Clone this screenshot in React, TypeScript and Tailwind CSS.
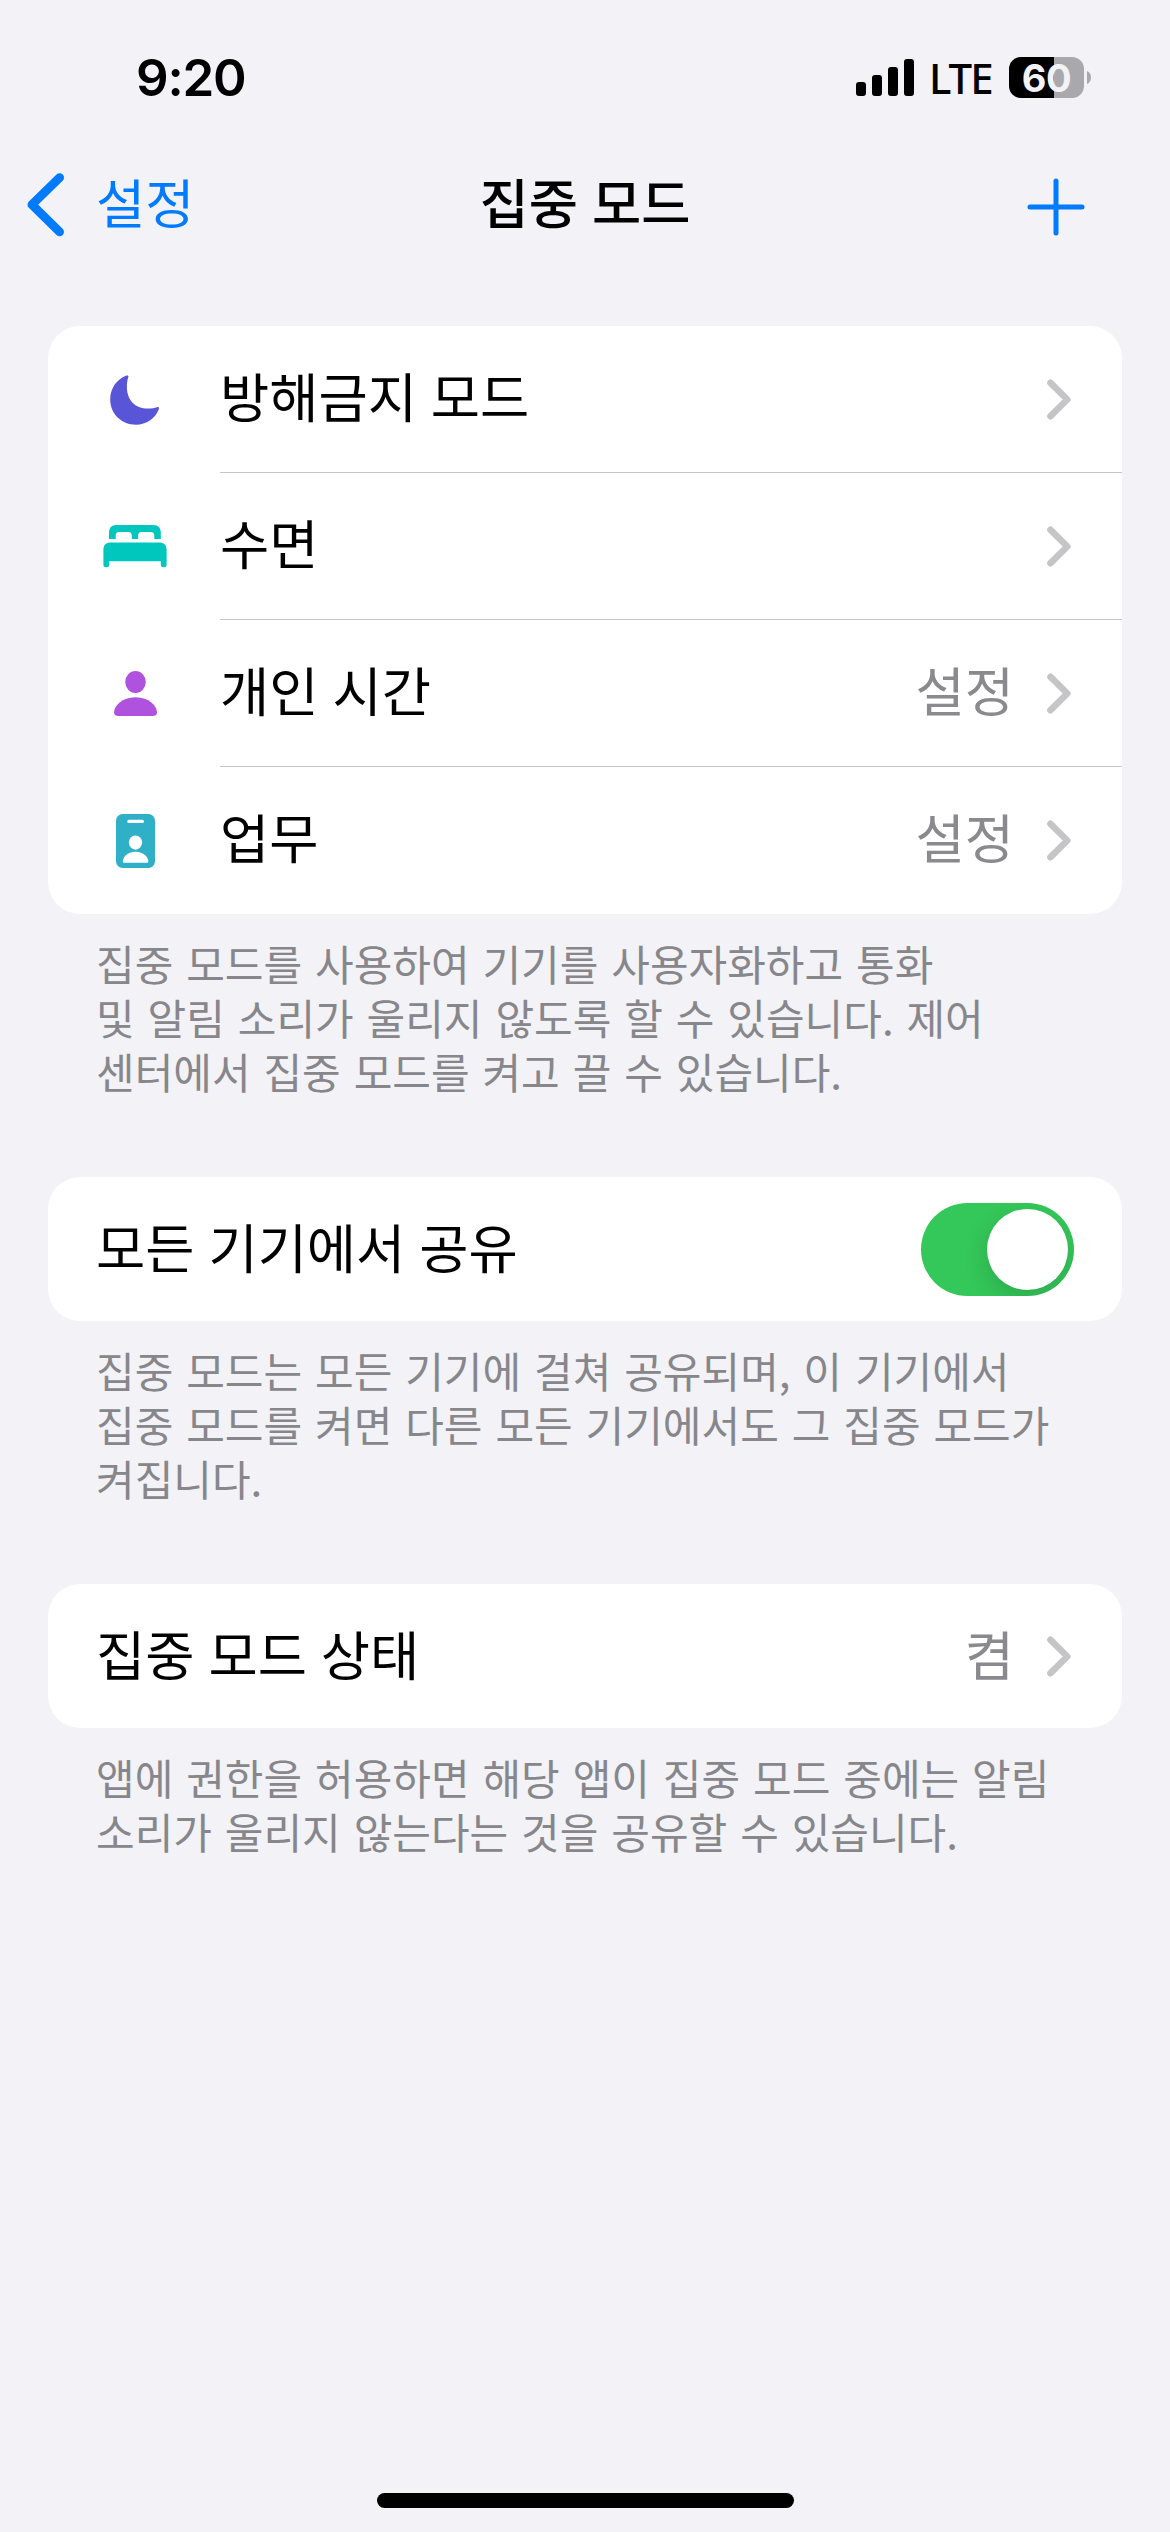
import type { ReactNode } from "react";

/* -----------------------
   Data models
   ----------------------- */
type FocusMode = {
  id: string;
  label: string;
  value?: string;
  icon: ReactNode;
};

/* -----------------------
   Icons
   ----------------------- */
const MoonIcon = () => (
  <svg width="50" height="50" viewBox="0 0 50 50" fill="#5856d6">
    <path d="M16.6 .5C18 .1 18.8 .8 18.3 2.2C17.2 5.5 16.9 8 16.9 12C16.9 25 25 33.6 38 33.6C42 33.6 44.500 33.1 47 32.3C48.800 31.700 49.400 32.7 48.800 34.3C45 43.800 36.500 49.7 26 49.7C11.500 49.7 .2 38.800 .2 24.2C.2 13.500 6.8 3.900 16.6 .5Z" />
  </svg>
);

const BedIcon = () => (
  <svg width="64" height="43" viewBox="0 0 64 43" fill="#00c7be">
    <path d="M6 14V7.500C6 3 8.600 0 13.300 0H50.500C55.200 0 57.800 3 57.800 7.500V14H51.300V10.500C51.300 8.200 50.200 7 48 7H38.500C36.300 7 35.200 8.200 35.200 10.500V14H28.800V10.500C28.800 8.200 27.700 7 25.500 7H16C13.800 7 12.700 8.200 12.700 10.500V14Z" />
    <path d="M.4 25C.4 20 3.200 17.600 8 17.600H56C60.800 17.600 63.600 20 63.600 25V39.500C63.600 41.200 62.800 42.200 61.500 42.200H60C58.600 42.200 57.800 41.300 57.800 39.500V36.300H6.200V39.500C6.200 41.300 5.400 42.200 4 42.200H2.500C1.200 42.200 .4 41.200 .4 39.500Z" />
  </svg>
);

const PersonIcon = () => (
  <svg width="43" height="45" viewBox="0 0 43 45" fill="#af52de">
    <ellipse cx="21.500" cy="11" rx="10.300" ry="11" />
    <path d="M4.500 45C1.500 45 0 43.800 0 41.500C0 35 8 26.300 21.500 26.300C35 26.300 43 35 43 41.500C43 43.800 41.500 45 38.500 45Z" />
  </svg>
);

const BadgeIcon = () => (
  <svg width="39" height="54" viewBox="0 0 39 54">
    <rect width="39" height="54" rx="6.500" fill="#30b0c7" />
    <rect x="11.300" y="5.800" width="16.600" height="3.300" rx="1.600" fill="#fff" />
    <ellipse cx="19.500" cy="28.600" rx="6.600" ry="7.100" fill="#fff" />
    <path
      d="M8.500 48.800C7.300 48.800 6.800 48.300 6.800 47.300C6.800 43.300 11.500 37.700 19.500 37.700C27.500 37.700 32.300 43.300 32.300 47.300C32.300 48.300 31.800 48.800 30.600 48.800Z"
      fill="#fff"
    />
  </svg>
);

const Chevron = () => (
  <svg
    width="24"
    height="41"
    viewBox="0 0 24 41"
    fill="none"
    stroke="#c5c5c7"
    strokeWidth="6.600"
    strokeLinecap="round"
    strokeLinejoin="round"
  >
    <path d="M3.500 3.800L20.300 20.500L3.500 37.200" />
  </svg>
);

const FOCUS_MODES: FocusMode[] = [
  { id: "dnd", label: "방해금지 모드", icon: <MoonIcon /> },
  { id: "sleep", label: "수면", icon: <BedIcon /> },
  { id: "personal", label: "개인 시간", value: "설정", icon: <PersonIcon /> },
  { id: "work", label: "업무", value: "설정", icon: <BadgeIcon /> },
];

/* -----------------------
   Building blocks
   ----------------------- */
const StatusBar = () => (
  <div className="flex h-[150px] items-center pt-[5px] pl-[136px] pr-[79px] font-['Inter',sans-serif]">
    <span className="text-[51px] leading-none font-semibold tracking-[-1.2px]">
      9:20
    </span>
    <div className="ml-auto flex items-center">
      <svg width="58" height="37" viewBox="0 0 58 37">
        <rect x="0" y="23" width="10" height="14" rx="3" />
        <rect x="16" y="16" width="10" height="21" rx="3" />
        <rect x="32" y="8" width="10" height="29" rx="3" />
        <rect x="48" y="0" width="10" height="37" rx="3" />
      </svg>
      <span className="ml-[15px] w-[63px] pt-[1px] font-['Noto_Sans',sans-serif] text-[42px] leading-none font-medium tracking-[-2px]">
        LTE
      </span>
      <div className="ml-[17px] flex h-[41px] w-[75px] items-center justify-center rounded-[12px] bg-linear-to-r from-black from-60% to-[#a9a8ad] to-60%">
        <span className="text-[38px] leading-none font-bold tracking-[-0.5px] text-[#f2f2f7]">
          60
        </span>
      </div>
      <svg className="ml-[3px]" width="4" height="13" viewBox="0 0 4 13">
        <path d="M0 0C2.500 1 4 3.500 4 6.500C4 9.500 2.500 12 0 13Z" fill="#a9a8ad" />
      </svg>
    </div>
  </div>
);

const NavBar = () => (
  <header className="grid h-[109px] grid-cols-3 items-center">
    <button className="flex items-center pl-[27px] text-[#007aff]">
      <svg
        width="38"
        height="64"
        viewBox="0 0 38 64"
        fill="none"
        stroke="currentColor"
        strokeWidth="8.800"
        strokeLinecap="round"
        strokeLinejoin="round"
      >
        <path d="M32.600 4.600L4.900 31.700L32.600 58.800" />
      </svg>
      <span className="-mt-[7px] ml-[31px]">설정</span>
    </button>
    <h1 className="-mt-[8px] text-center font-medium">집중 모드</h1>
    <button className="flex justify-end pt-[4px] pr-[85px] text-[#007aff]" aria-label="추가">
      <svg
        width="58"
        height="58"
        viewBox="0 0 58 58"
        stroke="currentColor"
        strokeWidth="5"
        strokeLinecap="round"
      >
        <path d="M29 3V55M3 29H55" />
      </svg>
    </button>
  </header>
);

const Card = ({ children }: { children: ReactNode }) => (
  <section className="overflow-hidden rounded-[32px] bg-white">{children}</section>
);

const Footnote = ({ lines }: { lines: string[] }) => (
  <p className="mt-[22px] mb-[79px] pl-12 text-[42px] leading-[54px] whitespace-nowrap text-[#87868b] [word-spacing:3.500px]">
    {lines.map((line) => (
      <span key={line} className="block">
        {line}
      </span>
    ))}
  </p>
);

const App = () => {
  return (
    <div className="flex h-[2532px] w-[1170px] flex-col bg-[#f2f2f7] font-['Noto_Sans_CJK_KR',sans-serif] text-[53.500px] leading-[72px] text-black [word-spacing:2px]">
      <StatusBar />
      <NavBar />

      <main className="px-12 pt-[67px]">
        {/* Focus list */}
        <Card>
          {FOCUS_MODES.map((mode, i) => (
            <div key={mode.id} className="flex h-[147px]">
              <div className="flex w-[172px] items-center justify-center pl-[2px]">
                {mode.icon}
              </div>
              <div
                className={`flex flex-1 items-center pr-[51px] ${
                  i < FOCUS_MODES.length - 1 ? "border-b border-[#c6c6c8]" : ""
                }`}
              >
                <span className="-mt-[9px]">{mode.label}</span>
                <span className="-mt-[9px] mr-[33px] ml-auto text-[#8a8a8e]">
                  {mode.value}
                </span>
                <Chevron />
              </div>
            </div>
          ))}
        </Card>
        <Footnote
          lines={[
            "집중 모드를 사용하여 기기를 사용자화하고 통화",
            "및 알림 소리가 울리지 않도록 할 수 있습니다. 제어",
            "센터에서 집중 모드를 켜고 끌 수 있습니다.",
          ]}
        />

        {/* Share across devices */}
        <Card>
          <div className="flex h-36 items-center justify-between px-12">
            <span className="-mt-[7px]">모든 기기에서 공유</span>
            <button
              role="switch"
              aria-checked="true"
              className="flex h-[93px] w-[153px] items-center justify-end overflow-hidden rounded-full bg-[#34c759] pr-[6px]"
            >
              <span className="size-[81px] rounded-full bg-white shadow-[0_9px_24px_rgba(0,0,0,0.15)]" />
            </button>
          </div>
        </Card>
        <Footnote
          lines={[
            "집중 모드는 모든 기기에 걸쳐 공유되며, 이 기기에서",
            "집중 모드를 켜면 다른 모든 기기에서도 그 집중 모드가",
            "켜집니다.",
          ]}
        />

        {/* Focus status */}
        <Card>
          <div className="flex h-36 items-center pr-[51px] pl-12">
            <span className="-mt-[7px]">집중 모드 상태</span>
            <span className="-mt-[7px] mr-[33px] ml-auto text-[#8a8a8e]">켬</span>
            <Chevron />
          </div>
        </Card>
        <Footnote
          lines={[
            "앱에 권한을 허용하면 해당 앱이 집중 모드 중에는 알림",
            "소리가 울리지 않는다는 것을 공유할 수 있습니다.",
          ]}
        />
      </main>

      {/* Home indicator */}
      <div className="mx-auto mt-auto mb-6 h-[15px] w-[417px] rounded-full bg-black" />
    </div>
  );
};

export default App;
